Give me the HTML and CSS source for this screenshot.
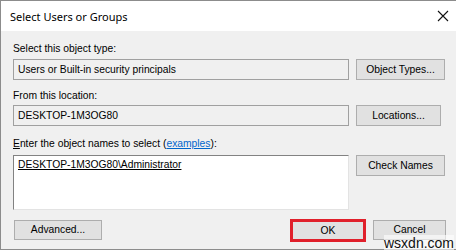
FILE: index.html
```html
<!DOCTYPE html>
<html>
<head>
<meta charset="utf-8">
<link rel="stylesheet" href="styles.css">
</head>
<body>
<div class="window">
  <div class="titlebar">
    <span class="title">Select Users or Groups</span>
    <svg class="close" width="12" height="12" viewBox="0 0 12 12"><path d="M1 1 L11 11 M11 1 L1 11" stroke="#111" stroke-width="1.1" fill="none"/></svg>
  </div>
  <div class="content">
    <div class="label l1">Select this object type:</div>
    <div class="row r1">
      <div class="field ro">Users or Built-in security principals</div>
      <div class="btn">Object Types...</div>
    </div>
    <div class="label l2">From this location:</div>
    <div class="row r2">
      <div class="field ro">DESKTOP-1M3OG80</div>
      <div class="btn narrow">Locations...</div>
    </div>
    <div class="label l3"><u>E</u>nter the object names to select (<a class="link">examples</a>):</div>
    <div class="row r3">
      <div class="field edit"><u>DESKTOP-1M3OG80\Administrator</u></div>
      <div class="btn">Check Names</div>
    </div>
    <div class="footer">
      <div class="btn adv">Advanced...</div>
      <div class="actions">
        <div class="btn ok">OK</div>
        <div class="btn cancel">Cancel</div>
      </div>
    </div>
  </div>
  <div class="watermark">wsxdn.com</div>
</div>
</body>
</html>
```
FILE: styles.css
```css
html, body {
  margin: 0;
  padding: 0;
  background: #ffffff;
}
body {
  width: 456px;
  height: 252px;
  overflow: hidden;
  font-family: "Liberation Sans", Arial, sans-serif;
  font-size: 10.3px;
  color: #000;
}
.window {
  position: relative;
  width: 470px;
  height: 248px;
  border-top: 1px solid #8c8c8c;
  border-left: 1px solid #8c8c8c;
  border-bottom: 1px solid #8c8c8c;
  background: #f0f0f0;
}
.titlebar {
  height: 30px;
  background: #ffffff;
  display: flex;
  align-items: center;
  padding-left: 9px;
}
.title {
  font-family: "Noto Sans", "Open Sans", sans-serif;
  font-size: 11px;
  color: #000;
  flex: 1;
}
.close {
  margin-right: 22px;
}
.content {
  padding: 0 0 0 12px;
}
.label {
  height: 14px;
  line-height: 14px;
}
.l1 { margin-top: 11px; margin-bottom: 3px; }
.l2 { margin-top: 9px; margin-bottom: 2px; }
.l3 { margin-top: 11px; margin-bottom: 4px; }
.row {
  display: flex;
  align-items: flex-start;
  gap: 7px;
}
.field {
  box-sizing: border-box;
  width: 336px;
  height: 21px;
  line-height: 19px;
  padding-left: 4px;
  border: 1px solid #a0a0a0;
}
.ro {
  background: #f0f0f0;
}
.edit {
  height: 55px;
  background: #ffffff;
  border-top: 1px solid #828282;
  border-left: 1px solid #828282;
  border-right: 1px solid #e3e3e3;
  border-bottom: 1px solid #e3e3e3;
  line-height: 15px;
  padding-top: 1px;
}
.btn {
  box-sizing: border-box;
  width: 89px;
  height: 21px;
  line-height: 19px;
  text-align: center;
  background: #e1e1e1;
  border: 1px solid #adadad;
}
.narrow { width: 85px; }
.link {
  color: #0066cc;
  text-decoration: underline;
}
.footer {
  margin-top: 10px;
  display: flex;
  justify-content: space-between;
  width: 433px;
}
.adv {
  width: 88px;
  margin-left: 1px;
  height: 20px;
  line-height: 18px;
}
.actions {
  display: flex;
  gap: 7px;
  margin-top: -1px;
}
.ok {
  width: 76px;
  height: 23px;
  border: 3px solid #e0202b;
  line-height: 17px;
}
.cancel {
  width: 73px;
  margin-top: 1px;
  height: 20px;
  line-height: 18px;
}
.watermark {
  position: absolute;
  left: 383px;
  top: 234px;
  font-family: "Liberation Sans", Arial, sans-serif;
  font-size: 14px;
  line-height: 16px;
  color: #111;
  background: rgba(255,255,255,0.6);
}
```
